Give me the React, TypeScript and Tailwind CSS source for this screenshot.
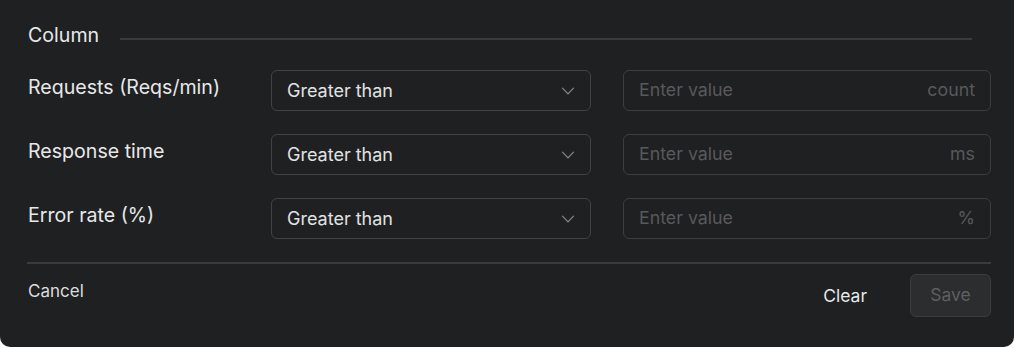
import { ReactNode } from "react"

const rows = [
    { label: "Requests (Reqs/min)", unit: "count" },
    { label: "Response time", unit: "ms" },
    { label: "Error rate (%)", unit: "%" },
]

function Chevron() {
    return (
        <svg width="14" height="8" viewBox="0 0 14 8" fill="none" className="text-[#88898b]">
            <path d="M1.5 1.2l5.5 5.6 5.5-5.6" stroke="currentColor" strokeWidth="1.2" strokeLinecap="round" strokeLinejoin="round" />
        </svg>
    )
}

function Row({ label, unit }: { label: string; unit: string }): ReactNode {
    return (
        <div className="flex items-start">
            <div className="w-[243px] pt-[5px] text-[19.6px] leading-[24px] text-[#e8e8e9]">{label}</div>
            <div className="flex h-[41px] w-[320px] items-center justify-between rounded-md border border-[#414244] pl-[15px] pr-[15px] text-[18px] text-[#e2e2e3]">
                <span>Greater than</span>
                <Chevron />
            </div>
            <div className="ml-[32px] flex h-[41px] w-[368px] items-center justify-between rounded-md border border-[#3c3d3f] px-[15px] text-[17.8px] text-[#58595b]">
                <span>Enter value</span>
                <span>{unit}</span>
            </div>
        </div>
    )
}

export default function App() {
    return (
        <div
            className="flex h-[347px] w-[1014px] flex-col rounded-b-[10px] bg-[#1f2022] pl-[28px] pt-[21px]"
            style={{ fontFamily: "Inter, 'Noto Sans', sans-serif" }}
        >
            <div className="flex h-[28px] items-center">
                <span className="w-[72px] text-[19.6px] leading-[28px] text-[#e8e8e9]">Column</span>
                <div className="ml-[20px] mt-[7px] h-[2px] w-[852px] bg-[#3a3b3d]" />
            </div>
            <div className="mt-[21px] flex flex-col gap-[23px]">
                {rows.map((r) => (
                    <Row key={r.label} label={r.label} unit={r.unit} />
                ))}
            </div>
            <div className="mt-[23px] ml-[-1px] h-[2px] w-[964px] bg-[#3a3b3d]" />
            <div className="flex w-[963px] items-start justify-between">
                <button className="mt-[15px] text-[17px] leading-[24px] text-[#dcdcdd]">Cancel</button>
                <div className="mt-[10px] flex items-center gap-[43px]">
                    <button className="text-[17.5px] leading-[24px] text-[#e8e8e9]">Clear</button>
                    <button className="h-[43px] w-[81px] rounded-md border border-[#3b3c3e] bg-[#2c2d2f] text-[17.5px] text-[#5e5f61]">
                        Save
                    </button>
                </div>
            </div>
        </div>
    )
}
